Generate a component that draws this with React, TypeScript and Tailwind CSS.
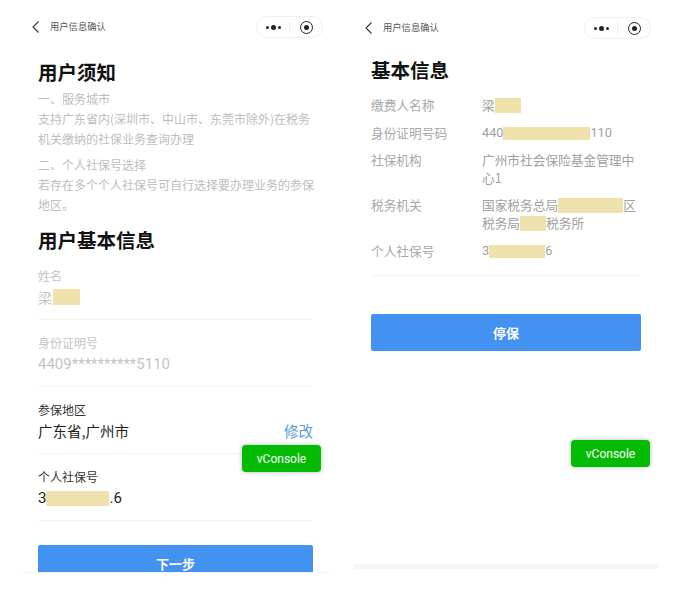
const FONT = "font-['Noto_Sans_CJK_SC','Liberation_Sans',sans-serif]";

function Mask({ className }: { className: string }) {
  return <span className={`inline-block bg-[#efe1ac] align-middle ${className}`} />;
}

function NavBar({ gapLeft }: { gapLeft: string }) {
  return (
    <div className={`flex h-[22px] items-center ${gapLeft}`}>
      <svg width="9" height="14" viewBox="0 0 9 14" fill="none" stroke="#333" strokeWidth="1.1">
        <path d="M7.5 1.5 L2 7 L7.5 12.5" />
      </svg>
      <span className="ml-[10px] text-[9.3px] leading-none text-[#555]">用户信息确认</span>
      <div className="ml-auto flex h-[22px] w-[67px] items-center rounded-full border border-[#f0f0f0] bg-white">
        <div className="flex h-[12px] w-[33px] items-center justify-center gap-[2px] border-r border-[#eeeeee]">
          <span className="h-[3px] w-[3px] rounded-full bg-[#222]" />
          <span className="h-[5px] w-[5px] rounded-full bg-[#222]" />
          <span className="h-[3px] w-[3px] rounded-full bg-[#222]" />
        </div>
        <div className="flex flex-1 items-center justify-center">
          <span className="flex h-[13px] w-[13px] items-center justify-center rounded-full border-[1.5px] border-[#222]">
            <span className="h-[5px] w-[5px] rounded-full bg-[#222]" />
          </span>
        </div>
      </div>
    </div>
  );
}

function VConsole({ className }: { className: string }) {
  return (
    <div
      className={`absolute flex h-[27px] w-[79px] items-center justify-center rounded-[4px] bg-[#03bb03] font-['Roboto',sans-serif] text-[12px] text-white shadow-[0_0_4px_rgba(0,0,0,0.3)] ${className}`}
    >
      vConsole
    </div>
  );
}

function Field({
  label,
  dark,
  children,
}: {
  label: string;
  dark?: boolean;
  children: React.ReactNode;
}) {
  return (
    <div className="h-[67px] border-b border-[#f3f3f3] pt-[13px]">
      <div className={`text-[12px] leading-[20px] ${dark ? "text-[#333]" : "text-[#c4c4c4]"}`}>{label}</div>
      <div className={`flex h-[22px] items-center text-[15px] ${dark ? "text-[#222]" : "text-[#c4c4c4]"}`}>
        {children}
      </div>
    </div>
  );
}

function InfoRow({
  label,
  children,
  className,
}: {
  label: string;
  children: React.ReactNode;
  className?: string;
}) {
  return (
    <div className={`flex text-[12.7px] leading-[18px] ${className ?? ""}`}>
      <div className="w-[111px] shrink-0 text-[#a8a8a8]">{label}</div>
      <div className="flex-1 text-[#a0a0a0]">{children}</div>
    </div>
  );
}

export default function App() {
  return (
    <div className={`relative flex h-[596px] w-[673px] overflow-hidden bg-white ${FONT}`}>
      {/* left phone */}
      <div className="ml-[22px] h-[573px] w-[308px] overflow-hidden border-b border-[#f5f5f5] pt-[16px]">
        <NavBar gapLeft="pl-[9px] pr-[7px]" />
        <div className="pl-[16px] pr-[16px]">
          <h1 className="mt-[21px] text-[19.5px] leading-[26px] font-bold text-[#111]">用户须知</h1>
          <div className="mt-[4px] text-[12px] leading-[20px] text-[#bdbdbd]">
            <p>一、服务城市</p>
            <p>支持广东省内(深圳市、中山市、东莞市除外)在税务机关缴纳的社保业务查询办理</p>
            <p className="mt-[6px]">二、个人社保号选择</p>
            <p>若存在多个个人社保号可自行选择要办理业务的参保地区。</p>
          </div>
          <h1 className="mt-[12px] text-[19.5px] leading-[26px] font-bold text-[#111]">用户基本信息</h1>
          <div className="w-[275px]">
            <Field label="姓名">
              <span className="text-[14px]">梁</span>
              <Mask className="ml-[1px] h-[16px] w-[27px]" />
            </Field>
            <Field label="身份证明号">
              <span className="font-['Roboto',sans-serif]">4409**********5110</span>
            </Field>
            <Field label="参保地区" dark>
              <span className="text-[14.5px]">广东省,广州市</span>
              <span className="ml-auto text-[14.5px] text-[#5b9ad8]">修改</span>
            </Field>
            <Field label="个人社保号" dark>
              <span className="font-['Roboto',sans-serif]">3</span>
              <Mask className="h-[15px] w-[63px]" />
              <span className="font-['Roboto',sans-serif]">.6</span>
            </Field>
          </div>
          <button className="mt-[24px] h-[37px] w-[275px] rounded-[2px] bg-[#4392f1] text-[13px] font-bold text-white">
            下一步
          </button>
        </div>
      </div>

      {/* right phone */}
      <div className="ml-[24px] w-[304px] pt-[17px]">
        <NavBar gapLeft="pl-[10px] pr-[7px]" />
        <div className="pl-[17px] pr-[17px]">
          <h1 className="mt-[18px] text-[19.5px] leading-[26px] font-bold text-[#111]">基本信息</h1>
          <div className="border-b border-[#f3f3f3] pb-[15px] pt-[13px]">
            <InfoRow label="缴费人名称">
              <span className="flex items-center">
                梁<Mask className="h-[15px] w-[26px]" />
              </span>
            </InfoRow>
            <InfoRow label="身份证明号码" className="mt-[10px]">
              <span className="flex items-center font-['Roboto',sans-serif]">
                440
                <Mask className="h-[13px] w-[87px]" />
                110
              </span>
            </InfoRow>
            <InfoRow label="社保机构" className="mt-[9px]">
              广州市社会保险基金管理中心1
            </InfoRow>
            <InfoRow label="税务机关" className="mt-[9px]">
              <span className="flex items-center">
                国家税务总局
                <Mask className="h-[15px] w-[65px]" />区
              </span>
              <span className="flex items-center">
                税务局
                <Mask className="h-[15px] w-[26px]" />
                税务所
              </span>
            </InfoRow>
            <InfoRow label="个人社保号" className="mt-[10px]">
              <span className="flex items-center font-['Roboto',sans-serif]">
                3
                <Mask className="h-[13px] w-[56px]" />6
              </span>
            </InfoRow>
          </div>
          <button className="mt-[38px] h-[37px] w-full rounded-[2px] bg-[#4392f1] text-[13px] font-bold text-white">
            停保
          </button>
        </div>
        <div className="mt-[213px] h-[5px] bg-[#f7f7f7]" />
      </div>

      <VConsole className="left-[242px] top-[445px]" />
      <VConsole className="left-[571px] top-[440px]" />
    </div>
  );
}
